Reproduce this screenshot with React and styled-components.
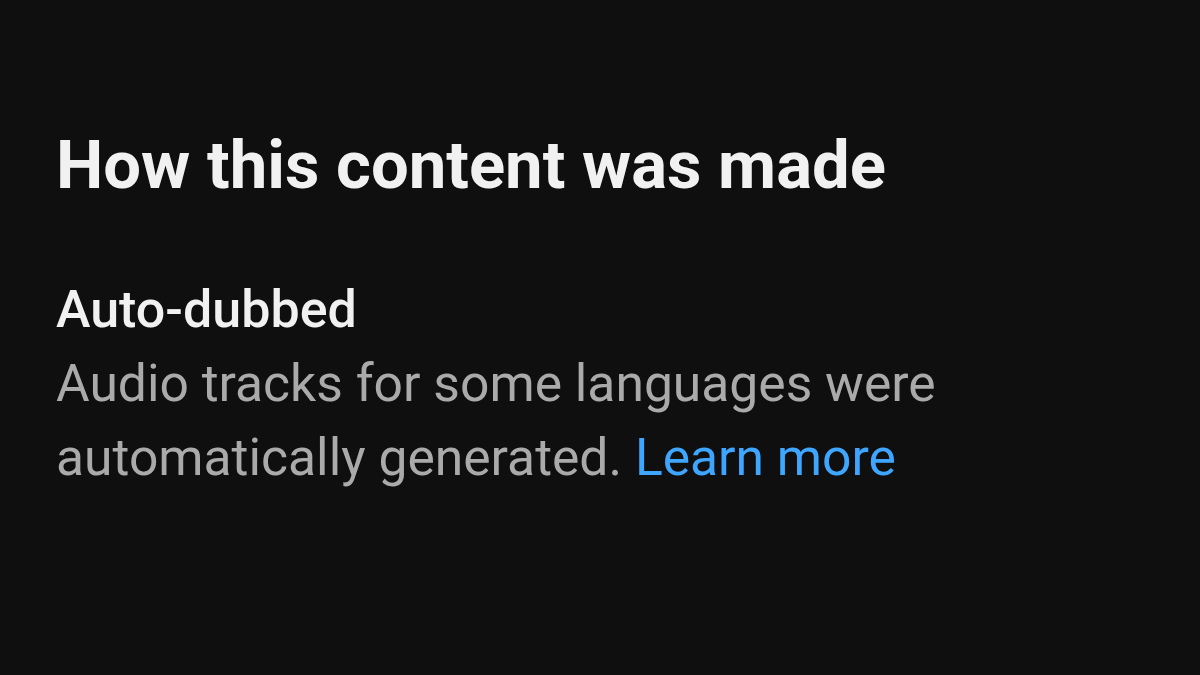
import React from 'react'
import styled, { createGlobalStyle } from 'styled-components'

const Global = createGlobalStyle`
  html, body {
    margin: 0;
    padding: 0;
    background: #0f0f0f;
  }
  body {
    font-family: Roboto, "Noto Sans", Arial, sans-serif;
  }
`

const Sheet = styled.div`
  width: 1200px;
  height: 675px;
  box-sizing: border-box;
  background: #0f0f0f;
  padding: 125px 56px 0 56px;
  display: flex;
  flex-direction: column;
  overflow: hidden;
`

const Title = styled.h1`
  margin: 0 0 68px 0;
  font-size: 67px;
  line-height: 80px;
  font-weight: 700;
  color: #f1f1f1;
`

const Section = styled.div`
  display: flex;
  flex-direction: column;
`

const Label = styled.div`
  font-size: 52px;
  line-height: 74px;
  font-weight: 500;
  color: #f1f1f1;
`

const Body = styled.p`
  margin: 0;
  font-size: 51.6px;
  line-height: 74px;
  font-weight: 400;
  color: #aaaaaa;
  max-width: 1000px;
`

const Link = styled.a`
  color: #3ea6ff;
  text-decoration: none;
  cursor: pointer;
`

export default function App() {
  return (
    <>
      <Global />
      <Sheet>
        <Title>How this content was made</Title>
        <Section>
          <Label>Auto-dubbed</Label>
          <Body>
            Audio tracks for some languages were automatically generated. <Link>Learn more</Link>
          </Body>
        </Section>
      </Sheet>
    </>
  )
}
